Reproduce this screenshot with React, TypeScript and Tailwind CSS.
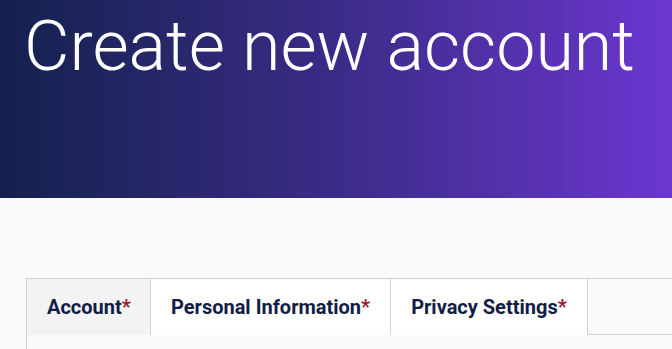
const tabs = [
  { label: 'Account', active: true },
  { label: 'Personal Information', active: false },
  { label: 'Privacy Settings', active: false },
];

export default function App() {
  return (
    <div className="min-h-screen bg-[#fafafa] font-['Roboto',sans-serif]">
      {/* Header */}
      <div className="h-[198px] bg-gradient-to-r from-[#13214e] via-[#3b2b88] to-[#6c36d0] px-[24px] pt-[3px]">
        <h1 className="text-[70px] font-light leading-[86px] text-white whitespace-nowrap">
          Create new account
        </h1>
      </div>

      {/* Tabs panel */}
      <div className="pt-[80px] pl-[26px]">
        <div className="border-l border-t border-[#d2d2d2] h-[80px]">
          <div className="flex border-b border-[#d2d2d2] h-[56px]">
            {tabs.map((t) => (
              <div
                key={t.label}
                className={`flex items-center px-[20px] h-[56px] text-[20px] font-bold text-[#121d45] border-r border-[#d2d2d2] ${
                  t.active ? 'bg-[#f3f3f3] w-[124px]' : 'bg-white'
                }`}
              >
                {t.label}
                <span className="text-[#9a1a35]">*</span>
              </div>
            ))}
            <div className="flex-1" />
          </div>
        </div>
      </div>
    </div>
  );
}
